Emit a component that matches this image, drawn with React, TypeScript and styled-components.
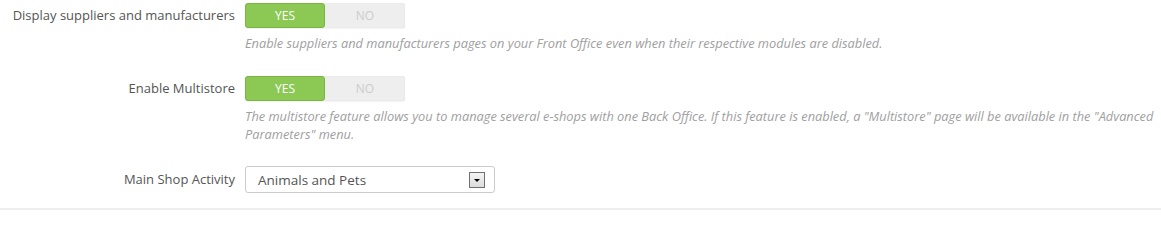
import styled, { createGlobalStyle } from 'styled-components';

const GlobalStyle = createGlobalStyle`
  body {
    margin: 0;
    background: #fff;
    font-family: "Open Sans", "Liberation Sans", sans-serif;
  }
`;

export default function App() {
    return (
        <>
            <GlobalStyle />
            <Panel>
                <FormGroup>
                    <Label>Display suppliers and manufacturers</Label>
                    <Field>
                        <Switch>
                            <SwitchOption $active>YES</SwitchOption>
                            <SwitchOption>NO</SwitchOption>
                        </Switch>
                        <Help>
                            Enable suppliers and manufacturers pages on your Front Office even when their respective modules are disabled.
                        </Help>
                    </Field>
                </FormGroup>
                <FormGroup>
                    <Label>Enable Multistore</Label>
                    <Field>
                        <Switch>
                            <SwitchOption $active>YES</SwitchOption>
                            <SwitchOption>NO</SwitchOption>
                        </Switch>
                        <Help>
                            The multistore feature allows you to manage several e-shops with one Back Office. If this feature is enabled, a "Multistore" page will be available in the "Advanced Parameters" menu.
                        </Help>
                    </Field>
                </FormGroup>
                <FormGroup>
                    <Label>Main Shop Activity</Label>
                    <Field>
                        <Select>
                            <span>Animals and Pets</span>
                            <SelectArrow />
                        </Select>
                    </Field>
                </FormGroup>
            </Panel>
        </>
    );
}

const Panel = styled.div`
  padding-top: 3px;
  padding-bottom: 15px;
  border-bottom: 2px solid #eee;
  display: flex;
  flex-direction: column;
  gap: 24px;
`;

const FormGroup = styled.div`
  display: grid;
  grid-template-columns: 235px 1fr;
  column-gap: 10px;
  align-items: start;
`;

const Label = styled.label`
  text-align: right;
  font-size: 13px;
  line-height: 25px;
  color: #555;
`;

const Field = styled.div`
  display: flex;
  flex-direction: column;
  gap: 6px;
  padding-right: 4px;
`;

const Switch = styled.div`
  display: flex;
  width: 160px;
  height: 25px;
  border-radius: 3px;
  background: #eee;
  box-shadow: inset 0 0 1px rgba(0, 0, 0, 0.15), 0 1px 1px rgba(0, 0, 0, 0.05);
`;

const SwitchOption = styled.span<{ $active?: boolean }>`
  flex: 1;
  display: flex;
  align-items: center;
  justify-content: center;
  font-size: 12px;
  text-transform: uppercase;
  border-radius: 3px;
  color: ${p => (p.$active ? '#fff' : '#ccc')};
  background: ${p => (p.$active ? '#8bc954' : 'transparent')};
  border: 1px solid ${p => (p.$active ? '#79b53f' : 'transparent')};
`;

const Help = styled.p`
  margin: 0;
  font-size: 12.8px;
  line-height: 18px;
  font-style: italic;
  color: #a0a0a0;
`;

const Select = styled.div`
  box-sizing: border-box;
  display: flex;
  align-items: center;
  justify-content: space-between;
  width: 250px;
  height: 27px;
  margin-top: -1px;
  padding: 0 9px 0 12px;
  border: 1px solid #ccc;
  border-radius: 3px;
  font-size: 13.5px;
  color: #555;
`;

const SelectArrow = styled.span`
  position: relative;
  box-sizing: border-box;
  width: 16px;
  height: 16px;
  border: 1px solid #707070;
  background: linear-gradient(#f4f4f4, #dcdcdc);

  &::after {
    content: '';
    position: absolute;
    left: 4px;
    top: 6px;
    border-left: 3px solid transparent;
    border-right: 3px solid transparent;
    border-top: 3px solid #000;
  }
`;
